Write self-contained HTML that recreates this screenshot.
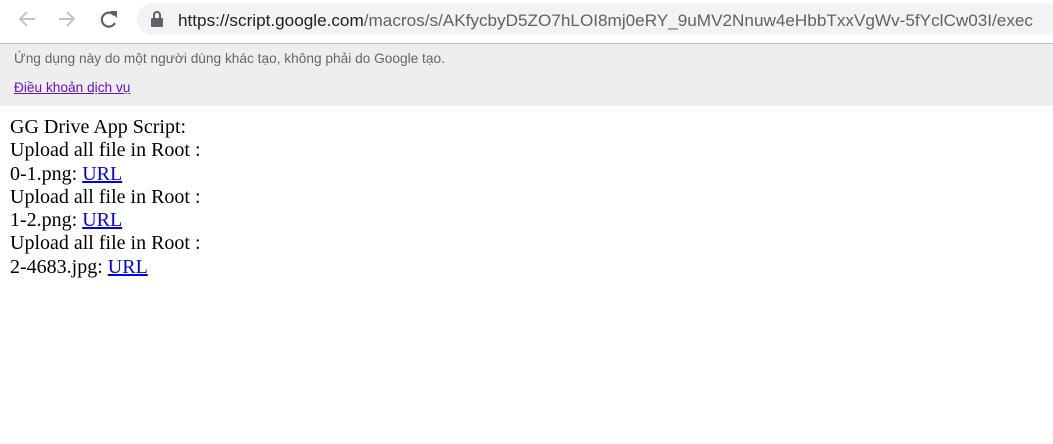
<!DOCTYPE html>
<html><head><meta charset="utf-8"><style>
body{margin:0;width:1053px;height:444px;background:#fff;overflow:hidden;position:relative;font-family:"Liberation Sans",sans-serif}
.tb{position:absolute;left:0;top:0;width:1053px;height:43px;background:#fff;border-bottom:1px solid #bdbdbd}
.pill{position:absolute;left:137px;top:3px;width:930px;height:32px;background:#f1f3f4;border-radius:16px}
.banner{position:absolute;left:0;top:44px;width:1053px;height:62px;background:#eeeeee}
.b1{position:absolute;left:14px;top:7px;font-size:13.7px;color:#666}
.b2{position:absolute;left:14px;top:36px;font-size:13.7px;color:#6611cc;text-decoration:underline}
.c{position:absolute;left:10px;top:116px;font-family:"Liberation Serif",serif;font-size:20px;line-height:23.3px;color:#000}
.c a{color:#0000ee;text-decoration:underline}
</style></head><body>
<div class="tb">
<svg width="140" height="40" style="position:absolute;left:0;top:0">
<path d="M35 19H20M27 12l-7 7 7 7" stroke="#c4c6c9" stroke-width="2" fill="none"/>
<path d="M59 19h15M67 12l7 7-7 7" stroke="#c4c6c9" stroke-width="2" fill="none"/>
<path d="M114.5 15.5A7 7 0 1 0 115 23" stroke="#5f6368" stroke-width="2.2" fill="none"/>
<path d="M110 11h7v7z" fill="#5f6368"/>
</svg>
<div class="pill"></div>
<svg width="20" height="20" style="position:absolute;left:148px;top:9px"><path d="M5 6a4 4 0 0 1 8 0v3h-2V6a2 2 0 0 0-4 0v3H5z" fill="#5f6368"/><rect x="3" y="9" width="12" height="9" rx="1" fill="#5f6368"/></svg>
<svg width="880" height="40" style="position:absolute;left:176px;top:0"><text x="2" y="26" font-family="Liberation Sans, sans-serif" font-size="17" textLength="855" lengthAdjust="spacingAndGlyphs"><tspan fill="#202124">https://script.google.com</tspan><tspan fill="#5f6368">/macros/s/AKfycbyD5ZO7hLOI8mj0eRY_9uMV2Nnuw4eHbbTxxVgWv-5fYclCw03I/exec</tspan></text></svg>
</div>
<div class="banner">
<div class="b1">Ứng dụng này do một người dùng khác tạo, không phải do Google tạo.</div>
<div class="b2">Điều khoản dịch vụ</div>
</div>
<div class="c">GG Drive App Script:<br>Upload all file in Root :<br>0-1.png: <a>URL</a><br>Upload all file in Root :<br>1-2.png: <a>URL</a><br>Upload all file in Root :<br>2-4683.jpg: <a>URL</a></div>
</body></html>
